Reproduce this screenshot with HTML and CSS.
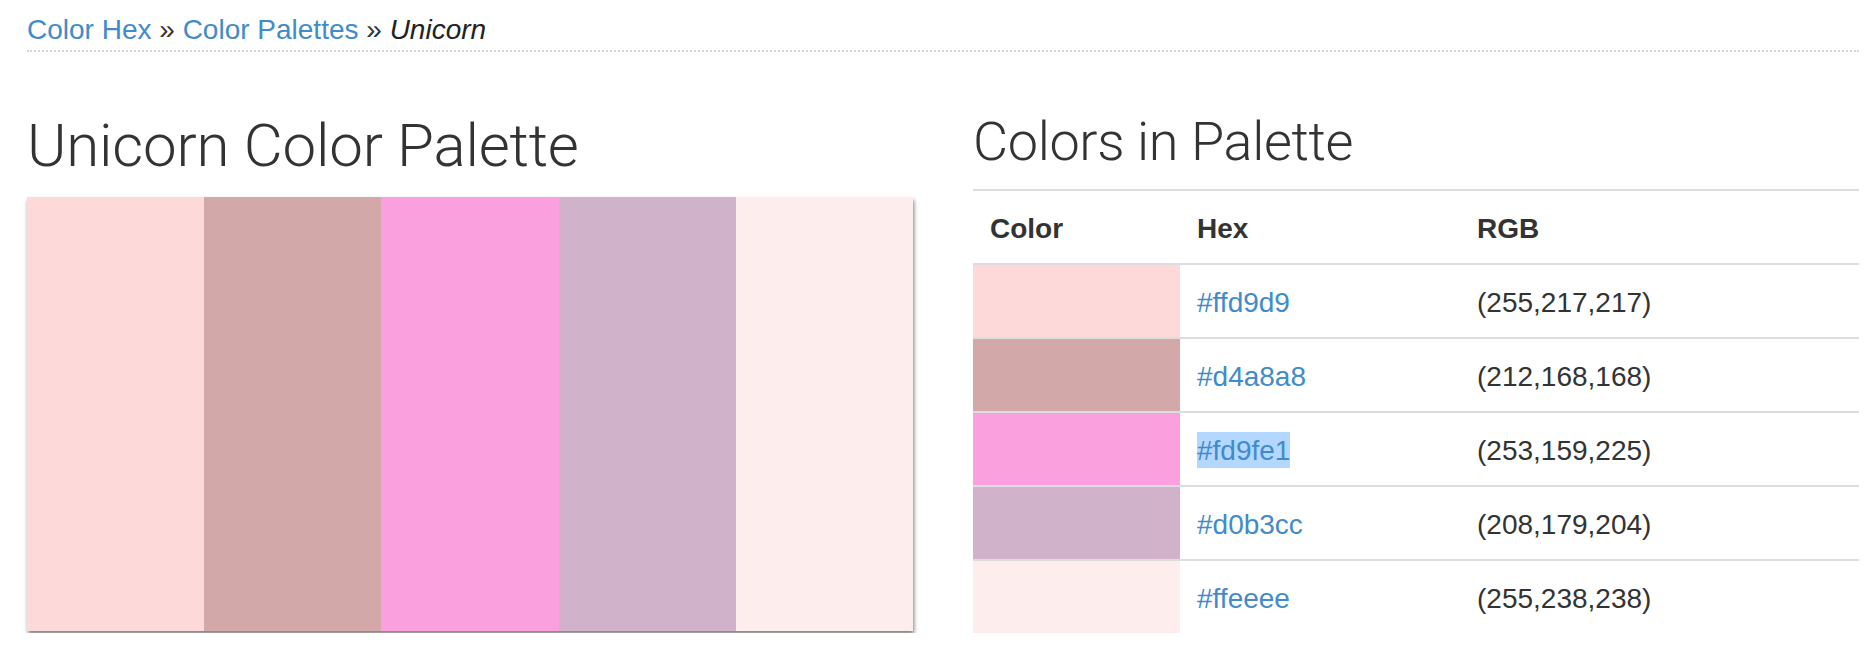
FILE: index.html
```html
<!DOCTYPE html>
<html lang="en">
<head>
<meta charset="utf-8">
<title>Unicorn Color Palette</title>
<link rel="stylesheet" href="styles.css">
</head>
<body>
<div class="page">
  <div class="breadcrumb">
    <a href="#">Color Hex</a> <span class="sep">&raquo;</span> <a href="#">Color Palettes</a> <span class="sep">&raquo;</span> <em>Unicorn</em>
  </div>
  <div class="columns">
    <section class="col">
      <h1 class="title">Unicorn Color Palette</h1>
      <div class="palette">
        <div class="swatch c1"></div>
        <div class="swatch c2"></div>
        <div class="swatch c3"></div>
        <div class="swatch c4"></div>
        <div class="swatch c5"></div>
      </div>
    </section>
    <section class="col">
      <h2 class="subtitle">Colors in Palette</h2>
      <table class="colors">
        <colgroup>
          <col class="w-color">
          <col class="w-hex">
          <col>
        </colgroup>
        <thead>
          <tr><th>Color</th><th>Hex</th><th>RGB</th></tr>
        </thead>
        <tbody>
          <tr><td class="c1"></td><td><a href="#">#ffd9d9</a></td><td>(255,217,217)</td></tr>
          <tr><td class="c2"></td><td><a href="#">#d4a8a8</a></td><td>(212,168,168)</td></tr>
          <tr><td class="c3"></td><td><a href="#" class="selected">#fd9fe1</a></td><td>(253,159,225)</td></tr>
          <tr><td class="c4"></td><td><a href="#">#d0b3cc</a></td><td>(208,179,204)</td></tr>
          <tr><td class="c5"></td><td><a href="#">#ffeeee</a></td><td>(255,238,238)</td></tr>
        </tbody>
      </table>
    </section>
  </div>
</div>
</body>
</html>
```
FILE: styles.css
```css
html, body {
  margin: 0;
  padding: 0;
  background: #fff;
}
body {
  font-family: "Liberation Sans", Arial, sans-serif;
  font-size: 28px;
  line-height: 40px;
  color: #333;
}
a {
  color: #428bca;
  text-decoration: none;
}
.page {
  padding: 0 15px 0 27px;
}
.breadcrumb {
  padding-top: 10px;
  border-bottom: 2px dotted #d6d6d6;
}
.breadcrumb .sep {
  color: #333;
}
.breadcrumb em {
  font-style: italic;
  color: #222;
}
.columns {
  display: grid;
  grid-template-columns: 1fr 1fr;
  column-gap: 60px;
}
.title {
  margin: 61px 0 0 0;
  font-family: Roboto, "Liberation Sans", sans-serif;
  font-weight: 300;
  font-size: 60px;
  line-height: 66px;
  letter-spacing: -0.2px;
  color: #333;
}
.palette {
  margin-top: 18px;
  height: 434px;
  display: flex;
  box-shadow: 1px 3px 4px rgba(0, 0, 0, 0.5);
}
.swatch {
  flex: 1;
}
.c1 { background: #fdd9d9; }
.c2 { background: #d2a8a8; }
.c3 { background: #fba0df; }
.c4 { background: #d0b3cb; }
.c5 { background: #fdeded; }
.subtitle {
  margin: 60px 0 17px 0;
  font-family: Roboto, "Liberation Sans", sans-serif;
  font-weight: 300;
  font-size: 54px;
  line-height: 60px;
  letter-spacing: -0.35px;
  color: #333;
}
.colors {
  width: 100%;
  border-collapse: separate;
  border-spacing: 0;
  table-layout: fixed;
}
.w-color { width: 207px; }
.w-hex { width: 280px; }
.colors th, .colors td {
  padding: 18px 17px 14px 17px;
  text-align: left;
  vertical-align: middle;
  line-height: 40px;
}
.colors th {
  font-weight: bold;
  border-top: 2px solid #ddd;
  border-bottom: 2px solid #ddd;
}
.colors tbody tr + tr td {
  border-top: 2px solid #ddd;
}
.selected {
  background: #b3d7ff;
  padding: 3px 0 2px 0;
}
```
